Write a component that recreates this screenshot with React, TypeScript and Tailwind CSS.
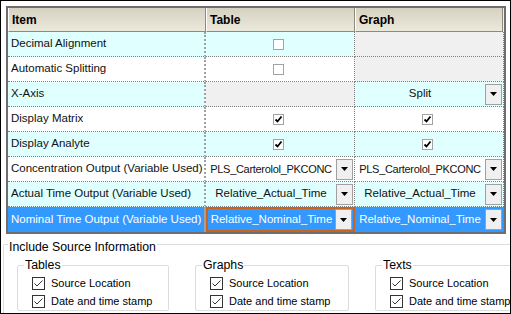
import React from 'react';

type Row = {
  label: string;
  bg: string;
  table: React.ReactNode;
  tableBg?: string;
  graph: React.ReactNode;
  graphBg?: string;
  selected?: boolean;
};

const GridCheck: React.FC<{ checked?: boolean }> = ({ checked }) => (
  <div className="w-[11px] h-[11px] mr-[4px] border border-[#a3a3a3] bg-white flex items-center justify-center">
    {checked && (
      <svg width="9" height="9" viewBox="0 0 9 9">
        <path d="M1.5 4.5 L3.5 6.5 L7.5 1.5" stroke="#000" strokeWidth="1.8" fill="none" />
      </svg>
    )}
  </div>
);

const DropButton: React.FC = () => (
  <div className="w-[17px] h-[21px] border border-[#a0a0a0] bg-[#f0f0f0] flex items-center justify-center shrink-0">
    <svg width="7" height="4" viewBox="0 0 7 4">
      <path d="M0 0 H7 L3.5 4 Z" fill="#000" />
    </svg>
  </div>
);

const Combo: React.FC<{ text: string; tight?: boolean }> = ({ text, tight }) => (
  <div className="flex items-center h-full w-full pr-[1px]">
    <span className={`flex-1 text-center whitespace-nowrap ${tight ? 'text-[11px] tracking-[-0.3px]' : 'text-[11.5px]'}`}>{text}</span>
    <DropButton />
  </div>
);

const rows: Row[] = [
  { label: 'Decimal Alignment', bg: 'bg-[#e0ffff]', table: <GridCheck />, graph: null, graphBg: 'bg-[#f0f0f0]' },
  { label: 'Automatic Splitting', bg: 'bg-white', table: <GridCheck />, graph: null, graphBg: 'bg-[#f0f0f0]' },
  { label: 'X-Axis', bg: 'bg-[#e0ffff]', table: null, tableBg: 'bg-[#f0f0f0]', graph: <Combo text="Split" /> },
  { label: 'Display Matrix', bg: 'bg-white', table: <GridCheck checked />, graph: <GridCheck checked /> },
  { label: 'Display Analyte', bg: 'bg-[#e0ffff]', table: <GridCheck checked />, graph: <GridCheck checked /> },
  { label: 'Concentration Output (Variable Used)', bg: 'bg-white', table: <Combo text="PLS_Carterolol_PKCONC" tight />, graph: <Combo text="PLS_Carterolol_PKCONC" tight /> },
  { label: 'Actual Time Output (Variable Used)', bg: 'bg-[#e0ffff]', table: <Combo text="Relative_Actual_Time" />, graph: <Combo text="Relative_Actual_Time" /> },
  { label: 'Nominal Time Output (Variable Used)', bg: 'bg-[#3399ff]', table: <Combo text="Relative_Nominal_Time" />, graph: <Combo text="Relative_Nominal_Time" />, selected: true },
];

const HeaderCell: React.FC<{ w: string; children: React.ReactNode }> = ({ w, children }) => (
  <div className={`${w} h-full flex items-center pl-[3px] border-l border-l-white border-r border-r-[#8d8a7c] border-b border-b-[#8d8a7c] bg-gradient-to-b from-[#d6d2c2] to-[#ebe9dc] font-bold text-[12px] text-black`}>
    {children}
  </div>
);

const WinCheck: React.FC<{ label: string }> = ({ label }) => (
  <div className="flex items-center h-[18px]">
    <div className="w-[13px] h-[13px] border border-[#333333] bg-white flex items-center justify-center">
      <svg width="11" height="11" viewBox="0 0 11 11">
        <path d="M1.5 5.5 L4 8 L9.5 2.5" stroke="#333" strokeWidth="1" fill="none" />
      </svg>
    </div>
    <span className="ml-[6px] text-[11px] text-black whitespace-nowrap">{label}</span>
  </div>
);

const SubGroup: React.FC<{ title: string; w: string }> = ({ title, w }) => (
  <fieldset className={`${w} border border-[#dcdcdc] rounded-[2px] shrink-0`}>
    <legend className="ml-[6px] px-[1px] text-[12.3px] leading-[14px] text-black">{title}</legend>
    <div className="pl-[14px] mt-[2px]">
      <WinCheck label="Source Location" />
      <WinCheck label="Date and time stamp" />
    </div>
  </fieldset>
);

export default function App() {
  return (
    <div className="w-[511px] h-[314px] border border-black bg-white overflow-hidden font-['Liberation_Sans',Arial,sans-serif]">
      <div className="pt-[5px] pl-[5px]">
        <div className="w-[500px] h-[228px] border-2 border-[#6e6e6e] bg-[#f0f0f0] text-[11.5px] text-[#111]">
          <div className="flex h-[24px]">
            <HeaderCell w="w-[198px]">Item</HeaderCell>
            <HeaderCell w="w-[149px]">Table</HeaderCell>
            <HeaderCell w="w-[148px]">Graph</HeaderCell>
          </div>
          {rows.map((r) => (
            <div key={r.label} className={`flex h-[25px] ${r.selected ? 'text-white' : ''}`}>
              <div className={`w-[198px] h-full flex items-center pl-[3px] whitespace-nowrap border-r-2 border-r-[#a0a0a0] ${r.selected ? '' : 'border-b border-dotted border-b-[#808080]'} ${r.bg}`}>
                {r.label}
              </div>
              <div className={`w-[149px] h-full flex items-center justify-center ${r.selected ? 'border-2 border-[#c8641e] bg-[#3399ff]' : `border-r border-b border-dotted border-[#808080] ${r.tableBg ?? r.bg}`}`}>
                {r.table}
              </div>
              <div className={`w-[149px] h-full flex items-center justify-center border-r border-dotted border-r-[#808080] ${r.selected ? '' : 'border-b border-b-[#808080]'} ${r.graphBg ?? r.bg}`}>
                {r.graph}
              </div>
            </div>
          ))}
        </div>
      </div>
      <fieldset className="ml-[2px] w-[503px] h-[90px] border border-[#dcdcdc] rounded-[2px]">
        <legend className="ml-[4px] px-[1px] pt-[6px] text-[12.3px] leading-[14px] text-black">Include Source Information</legend>
        <div className="flex gap-[26px] pl-[13px] mt-[4px]">
          <SubGroup title="Tables" w="w-[152px]" />
          <SubGroup title="Graphs" w="w-[154px]" />
          <SubGroup title="Texts" w="w-[154px]" />
        </div>
      </fieldset>
    </div>
  );
}
